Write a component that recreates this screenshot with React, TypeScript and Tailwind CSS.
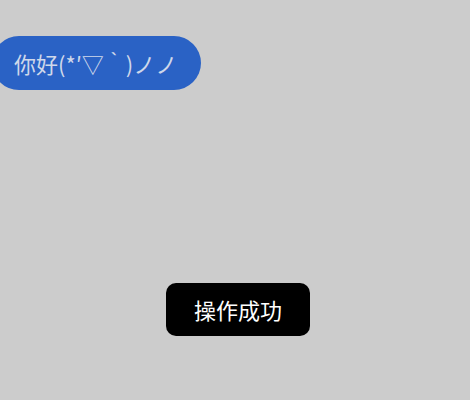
export default function App() {
  return (
    <div className="relative h-[400px] w-[470px] overflow-hidden bg-[#cccccc] font-['Noto_Sans_CJK_SC',sans-serif]">
      <div className="pt-[36px]">
        <div className="ml-[-8px] flex h-[54px] w-[209px] items-center rounded-full bg-[#2a62c5] pl-[22px] text-[22px] text-[#cfd8ea]">
          你好(*′▽｀)ノノ
        </div>
      </div>

      {/* toast */}
      <div className="absolute left-[166px] top-[283px] flex h-[53px] w-[144px] items-center justify-center rounded-[10px] bg-black text-[22px] text-white">
        操作成功
      </div>
    </div>
  )
}
